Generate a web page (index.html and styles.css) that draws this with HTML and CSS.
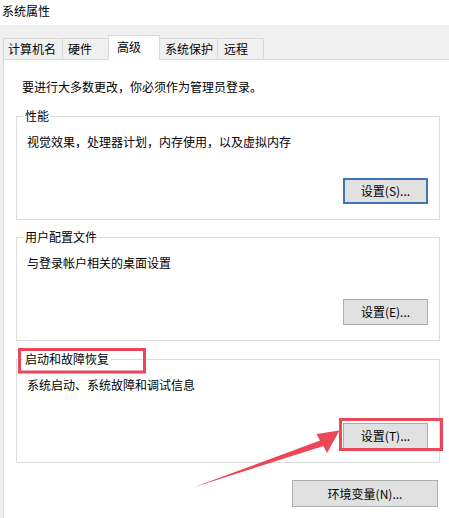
FILE: index.html
```html
<!DOCTYPE html>
<html lang="zh-CN">
<head>
<meta charset="utf-8">
<title>系统属性</title>
<link rel="stylesheet" href="styles.css">
</head>
<body>
<div class="window">
  <div class="titlebar">系统属性</div>
  <div class="tabs">
    <div class="tab t1">计算机名</div>
    <div class="tab t2">硬件</div>
    <div class="tab t3 active">高级</div>
    <div class="tab t4">系统保护</div>
    <div class="tab t5">远程</div>
  </div>
  <div class="panel">
    <p class="notice">要进行大多数更改，你必须作为管理员登录。</p>
    <fieldset class="group">
      <legend>性能</legend>
      <p class="desc">视觉效果，处理器计划，内存使用，以及虚拟内存</p>
      <div class="btnrow"><button class="btn focus">设置(S)...</button></div>
    </fieldset>
    <fieldset class="group">
      <legend>用户配置文件</legend>
      <p class="desc">与登录帐户相关的桌面设置</p>
      <div class="btnrow"><button class="btn">设置(E)...</button></div>
    </fieldset>
    <fieldset class="group startup">
      <legend>启动和故障恢复</legend>
      <p class="desc">系统启动、系统故障和调试信息</p>
      <div class="btnrow"><button class="btn">设置(T)...</button></div>
    </fieldset>
    <div class="envrow"><button class="btn env">环境变量(N)...</button></div>
  </div>
  <svg class="annot" width="449" height="518" viewBox="0 0 449 518">
    <rect x="19.5" y="349.5" width="125" height="22.5" fill="none" stroke="#ec4758" stroke-width="3"/>
    <rect x="340.5" y="419.5" width="101" height="30" fill="none" stroke="#ec4758" stroke-width="3"/>
    <polygon points="193,487.5 320,440.5 316.5,434 339.5,430.5 327,453 323.5,446" fill="#ec4758"/>
  </svg>
</div>
</body>
</html>
```
FILE: styles.css
```css
html, body {
  margin: 0;
  padding: 0;
}

.window {
  position: relative;
  width: 449px;
  height: 518px;
  overflow: hidden;
  background: #f0f0f0;
  color: #000;
  font-family: "Noto Sans CJK SC", "Microsoft YaHei", sans-serif;
  font-size: 12px;
  line-height: 16px;
}

.titlebar {
  height: 25px;
  background: #fff;
  padding-left: 2px;
  line-height: 21px;
}

.tabs {
  height: 34px;
  display: flex;
  align-items: flex-end;
  padding-left: 3px;
}

.tab {
  box-sizing: border-box;
  height: 21px;
  border: 1px solid #d9d9d9;
  border-bottom: none;
  display: flex;
  align-items: center;
  padding-left: 5px;
  margin-left: -1px;
  background: #f0f0f0;
}

.tab.t1 { margin-left: 0; width: 60px; padding-left: 4px; }
.tab.t2 { width: 47px; }
.tab.t3 { width: 52px; }
.tab.t4 { width: 59px; }
.tab.t5 { width: 47px; padding-left: 6px; }

.tab.active {
  height: 25px;
  background: #fff;
  margin-bottom: -1px;
  position: relative;
  z-index: 1;
  padding-left: 8px;
  padding-bottom: 2px;
}

.panel {
  margin-left: 3px;
  border-left: 1px solid #d9d9d9;
  border-top: 1px solid #d9d9d9;
  background: #fff;
  height: 459px;
  padding: 19px 0 0 12px;
}

.notice {
  margin: 0 0 14px 6px;
}

.group {
  box-sizing: border-box;
  width: 424px;
  min-width: 0;
  margin: 0;
  border: 1px solid #dcdcdc;
  padding: 0 11px 15px 10px;
}

.group + .group {
  margin-top: 10px;
}

.group legend {
  padding: 0 2px;
  margin-left: -4px;
  line-height: 14px;
}

.desc {
  margin: 11px 0 0;
}

.btnrow {
  display: flex;
  justify-content: flex-end;
  margin-top: 28px;
}

.group.startup {
  margin-top: 11px;
  padding-bottom: 13px;
}

.group.startup .btnrow {
  margin-top: 30px;
}

.btn {
  box-sizing: border-box;
  width: 85px;
  height: 26px;
  margin: 0;
  padding: 0;
  border: 1px solid #adadad;
  background: #e1e1e1;
  color: #000;
  font: inherit;
  line-height: 16px;
  display: flex;
  align-items: center;
  justify-content: center;
}

.btn.focus {
  border: 2px solid #3f74b6;
}

.envrow {
  width: 422px;
  display: flex;
  justify-content: flex-end;
  margin-top: 17px;
}

.btn.env {
  width: 146px;
  height: 27px;
}

.annot {
  position: absolute;
  left: 0;
  top: 0;
  pointer-events: none;
}
```
